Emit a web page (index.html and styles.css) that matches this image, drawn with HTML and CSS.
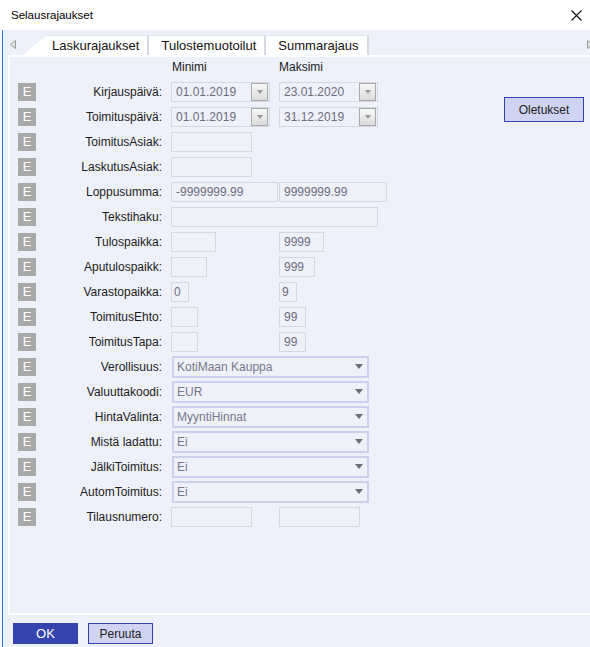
FILE: index.html
```html
<!DOCTYPE html>
<html lang="fi">
<head>
    <meta charset="UTF-8">
    <meta name="viewport" content="width=device-width, initial-scale=1.0">
    <title>Selausrajaukset</title>
    <link rel="stylesheet" href="styles.css">
</head>
<body>
<div class="window">
    <div class="titlebar">
        <span>Selausrajaukset</span>
        <svg class="close" width="11" height="11" viewBox="0 0 11 11"><path d="M0.5 0.5 L10.5 10.5 M10.5 0.5 L0.5 10.5" stroke="#111" stroke-width="1.1"/></svg>
    </div>
    <div class="dialog">
        <div class="tabstrip">
            <svg class="scroll left" width="6" height="9" viewBox="0 0 6 9"><polygon points="5.5,0.5 0.5,4.5 5.5,8.5" fill="#e4e4e4" stroke="#9c9c9c"/></svg>
            <div class="tabs">
                <div class="tab first">Laskurajaukset</div>
                <div class="tab">Tulostemuotoilut</div>
                <div class="tab">Summarajaus</div>
            </div>
            <svg class="scroll right" width="6" height="9" viewBox="0 0 6 9"><polygon points="0.5,0.5 5.5,4.5 0.5,8.5" fill="#e4e4e4" stroke="#9c9c9c"/></svg>
        </div>

        <div class="panel">
            <div class="form">
                <div class="head">
                    <span></span><span></span>
                    <span class="col-min">Minimi</span>
                    <span>Maksimi</span>
                </div>

                <div class="row">
                    <span class="e">E</span>
                    <label>Kirjauspäivä:</label>
                    <div class="date"><span>01.01.2019</span><span class="drop"><i class="caret small"></i></span></div>
                    <div class="date"><span>23.01.2020</span><span class="drop"><i class="caret small"></i></span></div>
                </div>
                <div class="row">
                    <span class="e">E</span>
                    <label>Toimituspäivä:</label>
                    <div class="date"><span>01.01.2019</span><span class="drop"><i class="caret small"></i></span></div>
                    <div class="date"><span>31.12.2019</span><span class="drop"><i class="caret small"></i></span></div>
                </div>
                <div class="row">
                    <span class="e">E</span>
                    <label>ToimitusAsiak:</label>
                    <input class="field w-81" type="text" readonly>
                </div>
                <div class="row">
                    <span class="e">E</span>
                    <label>LaskutusAsiak:</label>
                    <input class="field w-81" type="text" readonly>
                </div>
                <div class="row">
                    <span class="e">E</span>
                    <label>Loppusumma:</label>
                    <input class="field w-107" type="text" readonly value="-9999999.99">
                    <input class="field w-108" type="text" readonly value="9999999.99">
                </div>
                <div class="row">
                    <span class="e">E</span>
                    <label>Tekstihaku:</label>
                    <input class="field w-207 wide" type="text" readonly>
                </div>
                <div class="row">
                    <span class="e">E</span>
                    <label>Tulospaikka:</label>
                    <input class="field w-45" type="text" readonly>
                    <input class="field w-45" type="text" readonly value="9999">
                </div>
                <div class="row">
                    <span class="e">E</span>
                    <label>Aputulospaikk:</label>
                    <input class="field w-36" type="text" readonly>
                    <input class="field w-36" type="text" readonly value="999">
                </div>
                <div class="row">
                    <span class="e">E</span>
                    <label>Varastopaikka:</label>
                    <input class="field w-18" type="text" readonly value="0">
                    <input class="field w-18" type="text" readonly value="9">
                </div>
                <div class="row">
                    <span class="e">E</span>
                    <label>ToimitusEhto:</label>
                    <input class="field w-27" type="text" readonly>
                    <input class="field w-27" type="text" readonly value="99">
                </div>
                <div class="row">
                    <span class="e">E</span>
                    <label>ToimitusTapa:</label>
                    <input class="field w-27" type="text" readonly>
                    <input class="field w-27" type="text" readonly value="99">
                </div>
                <div class="row">
                    <span class="e">E</span>
                    <label>Verollisuus:</label>
                    <div class="select"><span>KotiMaan Kauppa</span><i class="caret"></i></div>
                </div>
                <div class="row">
                    <span class="e">E</span>
                    <label>Valuuttakoodi:</label>
                    <div class="select"><span>EUR</span><i class="caret"></i></div>
                </div>
                <div class="row">
                    <span class="e">E</span>
                    <label>HintaValinta:</label>
                    <div class="select"><span>MyyntiHinnat</span><i class="caret"></i></div>
                </div>
                <div class="row">
                    <span class="e">E</span>
                    <label>Mistä ladattu:</label>
                    <div class="select"><span>Ei</span><i class="caret"></i></div>
                </div>
                <div class="row">
                    <span class="e">E</span>
                    <label>JälkiToimitus:</label>
                    <div class="select"><span>Ei</span><i class="caret"></i></div>
                </div>
                <div class="row">
                    <span class="e">E</span>
                    <label>AutomToimitus:</label>
                    <div class="select"><span>Ei</span><i class="caret"></i></div>
                </div>
                <div class="row">
                    <span class="e">E</span>
                    <label>Tilausnumero:</label>
                    <input class="field w-81" type="text" readonly>
                    <input class="field w-81" type="text" readonly>
                </div>
            </div>

            <div class="side">
                <button class="btn defaults">Oletukset</button>
            </div>
        </div>

        <div class="footer">
            <button class="btn primary">OK</button>
            <button class="btn">Peruuta</button>
        </div>
    </div>
</div>
</body>
</html>
```

FILE: styles.css
```css
* {
    box-sizing: border-box;
}
body {
    margin: 0;
    font-family: 'Liberation Sans', Arial, sans-serif;
    font-size: 12px;
    color: #1c1c1c;
    background-color: #fff;
}
.window {
    width: 590px;
    height: 647px;
    overflow: hidden;
    background-color: #fff;
}
.titlebar {
    height: 30px;
    display: flex;
    align-items: center;
    justify-content: space-between;
    padding: 0 8px 0 11px;
    font-size: 11.5px;
    color: #000;
}
.dialog {
    height: 617px;
    margin-left: 2px;
    border-left: 1px solid #2a7ad6;
    background-color: #eef1f9;
}

/* tab strip */
.tabstrip {
    height: 25px;
    display: flex;
    align-items: flex-end;
}
.scroll {
    align-self: center;
    margin-top: 4px;
}
.scroll.left {
    margin-left: 7px;
}
.scroll.right {
    margin-left: auto;
    margin-right: -3px;
}
.tabs {
    display: flex;
    margin-left: 31px;
}
.tab {
    position: relative;
    height: 20px;
    line-height: 19px;
    padding: 0 8px 0 12px;
    background-color: #fff;
    border-top: 1px solid #e3e5ec;
    border-right: 2px solid #d6d9e1;
    font-size: 13px;
    color: #111;
}
.tab.first {
    padding-left: 5px;
}
.tab.first::before {
    content: "";
    position: absolute;
    left: -24px;
    top: -1px;
    bottom: 0;
    width: 24px;
    background-color: #fff;
    clip-path: polygon(100% 0, 100% 100%, 0 100%);
}

/* main panel */
.panel {
    height: 560px;
    margin-left: 5px;
    border: 2px solid #fff;
    border-right: none;
    display: flex;
}
.form {
    padding-left: 8px;
}
.head, .row {
    display: grid;
    grid-template-columns: 18px 135px 108px auto;
}
.head {
    height: 22px;
    line-height: 20px;
}
.col-min {
    padding-left: 1px;
}
.row {
    height: 25px;
    align-items: center;
}
.e {
    width: 18px;
    height: 18px;
    line-height: 18px;
    text-align: center;
    background-color: #a9a9a9;
    color: #fff;
    font-size: 13px;
}
.row label {
    text-align: right;
    padding-right: 9px;
}
.field {
    height: 20px;
    padding: 0 4px;
    border: 1px solid #d5d8e3;
    background-color: #eff1f9;
    color: #6c6c7e;
    font: inherit;
    outline: none;
}
.w-18 { width: 18px; padding: 0 2px; }
.w-27 { width: 27px; }
.w-36 { width: 36px; }
.w-45 { width: 45px; }
.w-81 { width: 81px; }
.w-107 { width: 107px; }
.w-108 { width: 108px; }
.w-207 { width: 207px; }
.wide {
    grid-column: 3 / 5;
}
.date {
    width: 99px;
    height: 20px;
    display: flex;
    align-items: center;
    justify-content: space-between;
    padding: 0 1px 0 4px;
    border: 1px solid #d5d8e3;
    color: #6c6c7e;
}
.drop {
    width: 17px;
    height: 18px;
    display: flex;
    align-items: center;
    justify-content: center;
    border: 1px solid #a9a9a9;
    background: linear-gradient(#f8f8f8, #dcdcdc);
}
.caret {
    width: 0;
    height: 0;
    border-left: 4.5px solid transparent;
    border-right: 4.5px solid transparent;
    border-top: 5px solid #6e6e6e;
}
.caret.small {
    border-left-width: 3.5px;
    border-right-width: 3.5px;
    border-top: 4px solid #9a9a9a;
}
.select {
    grid-column: 3 / 5;
    width: 197px;
    height: 22px;
    margin-left: 1px;
    display: flex;
    align-items: center;
    justify-content: space-between;
    padding: 0 4px 0 3px;
    border: 2px solid #cbd0ec;
    background-color: #eff1f9;
    color: #77778a;
}

/* buttons */
.side {
    margin-left: auto;
    padding-top: 40px;
    padding-right: 6px;
}
.btn {
    width: 65px;
    height: 21px;
    padding: 0;
    border: 1px solid #3443ad;
    background-color: #ced4f1;
    color: #222;
    font: inherit;
    cursor: pointer;
}
.btn.defaults {
    width: 80px;
    height: 25px;
    border-width: 1.5px;
}
.btn.primary {
    background-color: #3443ad;
    color: #fff;
    font-size: 13px;
}
.footer {
    display: flex;
    gap: 10px;
    padding: 8px 0 0 10px;
}
```
